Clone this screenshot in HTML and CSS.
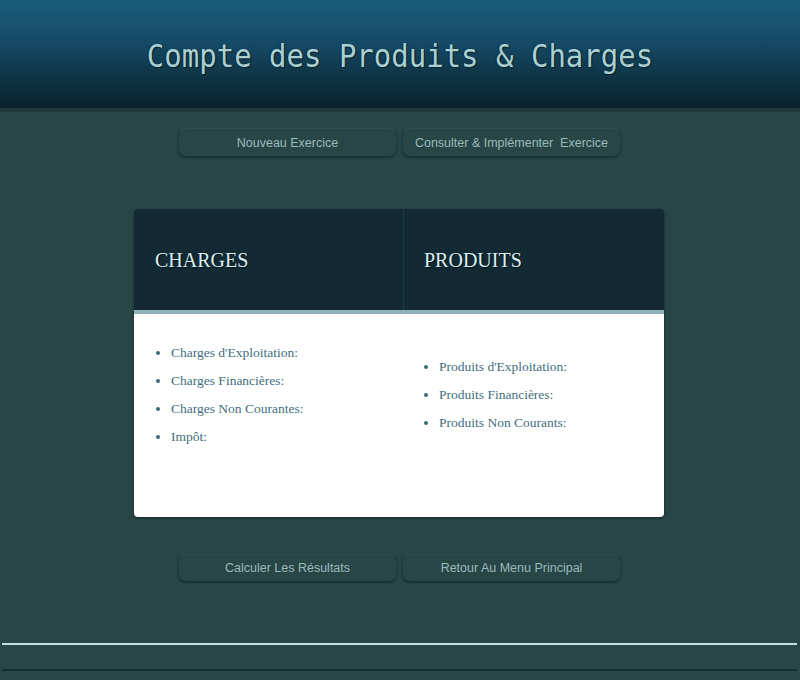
FILE: index.html
```html
<!DOCTYPE html>
<html lang="fr">
<head>
<meta charset="utf-8">
<title>Compte des Produits &amp; Charges</title>
<link rel="stylesheet" href="styles.css">
</head>
<body>
<header class="top">
  <h1 class="title">Compte des Produits &amp; Charges</h1>
</header>
<div class="band"></div>
<nav class="btn-row top-row">
  <a class="btn">Nouveau Exercice</a>
  <a class="btn">Consulter &amp; Implémenter&nbsp; Exercice</a>
</nav>
<section class="card">
  <div class="card-head">
    <h2 class="col-title">CHARGES</h2>
    <h2 class="col-title right">PRODUITS</h2>
  </div>
  <div class="stripe"></div>
  <div class="card-body">
    <ul class="list">
      <li>Charges d'Exploitation:</li>
      <li>Charges Financières:</li>
      <li>Charges Non Courantes:</li>
      <li>Impôt:</li>
    </ul>
    <ul class="list right">
      <li>Produits d'Exploitation:</li>
      <li>Produits Financières:</li>
      <li>Produits Non Courants:</li>
    </ul>
  </div>
</section>
<nav class="btn-row bottom-row">
  <a class="btn">Calculer Les Résultats</a>
  <a class="btn">Retour Au Menu Principal</a>
</nav>
<footer class="foot"></footer>
</body>
</html>
```
FILE: styles.css
```css
html, body {
  margin: 0;
  padding: 0;
}
body {
  background: #284646;
  font-family: "Liberation Sans", Arial, sans-serif;
  height: 680px;
  overflow: hidden;
}
.top {
  height: 108px;
  background: linear-gradient(to bottom, #1a5b7b 0%, #154a66 40%, #0e3141 75%, #0a222e 100%);
  display: flex;
  align-items: center;
  justify-content: center;
}
.title {
  margin: 0;
  padding-top: 4px;
  font-family: "DejaVu Sans Mono", "Liberation Mono", monospace;
  font-weight: normal;
  font-size: 29px;
  transform: scaleY(1.08);
  color: #a9d0d3;
  text-shadow: 1px 1px 1px #0a2028, -1px 0 1px rgba(10, 30, 40, 0.6);
}
.band {
  height: 4px;
  background: #1f3a3b;
}
.btn-row {
  display: flex;
  justify-content: center;
  gap: 5px;
  padding-left: 0;
  padding-right: 1px;
}
.top-row {
  margin-top: 16px;
}
.bottom-row {
  margin-top: 37px;
}
.btn {
  width: 217px;
  height: 27px;
  box-sizing: content-box;
  display: flex;
  align-items: center;
  justify-content: center;
  border: 1px solid #213d3d;
  border-top-color: #2f4e4e;
  border-bottom-color: #1a3131;
  border-radius: 8px;
  box-shadow: 0 1px 2px rgba(0, 0, 0, 0.35);
  color: #9bbaba;
  font-size: 12.5px;
  white-space: nowrap;
}
.bottom-row .btn {
  height: 26px;
}
.card {
  width: 530px;
  margin: 52px auto 0;
  border-radius: 4px;
  overflow: hidden;
  box-shadow: 0 1px 3px rgba(0, 0, 0, 0.5);
  position: relative;
  left: -1px;
}
.card-head {
  display: grid;
  grid-template-columns: 269px 1fr;
  height: 101px;
  background: #132a34;
}
.col-title {
  margin: 0;
  display: flex;
  align-items: center;
  padding-left: 21px;
  padding-top: 2px;
  font-family: "Liberation Serif", "Times New Roman", serif;
  font-weight: normal;
  font-size: 20px;
  color: #dcf0f2;
  text-shadow: 1px 1px 1px #05131a;
}
.col-title.right {
  border-left: 1px solid #1e3a44;
  padding-left: 20px;
}
.stripe {
  height: 4px;
  background: #8fb1bb;
}
.card-body {
  display: grid;
  grid-template-columns: 269px 1fr;
  align-items: center;
  height: 161px;
  padding-bottom: 42px;
  background: #ffffff;
}
.list {
  margin: 0;
  padding-left: 37px;
  font-family: "Liberation Serif", "Times New Roman", serif;
  font-size: 13.5px;
  line-height: 28px;
  color: #3f6f7d;
}
.list.right {
  padding-left: 36px;
}
.list li::marker {
  color: #3c6a78;
}
.foot {
  margin: 61px 3px 0 2px;
  height: 24px;
  border-top: 2px solid #bde0e0;
  border-bottom: 2px solid #172e2e;
}
```
